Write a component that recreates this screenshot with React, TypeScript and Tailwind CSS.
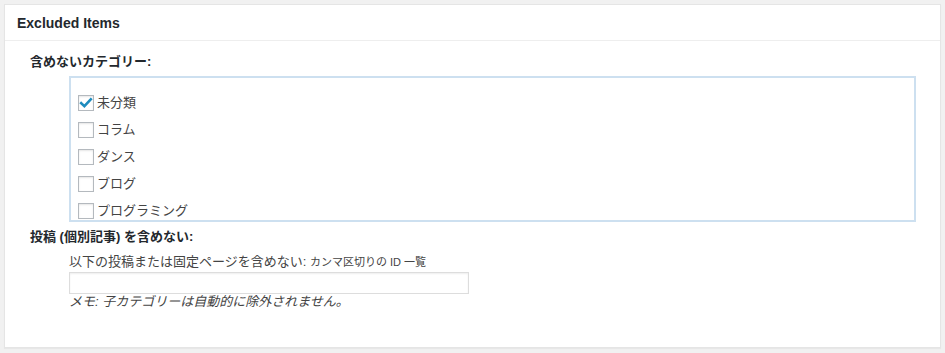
import React from "react";

const font = {
  fontFamily: '"Liberation Sans", "Noto Sans CJK JP", sans-serif',
};

function Check({ checked, label }: { checked?: boolean; label: string }) {
  return (
    <div className="flex items-center h-4 mb-[11px]">
      <span className="relative w-4 h-4 border border-[#b4b9be] bg-white shadow-[inset_0_1px_2px_rgba(0,0,0,0.1)] shrink-0">
        {checked && (
          <svg
            viewBox="0 0 16 16"
            className="absolute left-[-1px] top-[-1px] w-4 h-4"
          >
            <path
              d="M3.2 8.2 L6.4 11.2 L12.8 4.4"
              fill="none"
              stroke="#1e8cbe"
              strokeWidth="2.6"
              strokeLinecap="square"
              strokeLinejoin="miter"
            />
          </svg>
        )}
      </span>
      <span className="ml-[3px] text-[13px] leading-[16px] text-[#444]">
        {label}
      </span>
    </div>
  );
}

export default function App() {
  return (
    <div
      className="w-full h-[353px] bg-[#f1f1f1] pt-[4px] px-[4px]"
      style={font}
    >
      <div className="h-[344px] bg-white border border-[#e5e5e5] shadow-[0_1px_1px_rgba(0,0,0,0.04)] flex flex-col">
        <div className="h-[36px] border-b border-[#eeeeee] flex items-center pl-[12px]">
          <h2 className="text-[14px] font-bold text-[#23282d] leading-[18px]">
            Excluded Items
          </h2>
        </div>
        <div className="pt-[12px] pl-[25px] pr-[24px]">
          <div className="text-[13px] font-bold text-[#23282d] leading-[18px]">
            含めないカテゴリー:
          </div>
          <div className="mt-[5px] ml-[39px] h-[146px] border-2 border-[#cde0f0] overflow-hidden pt-[17px] pl-[7px]">
            <Check checked label="未分類" />
            <Check label="コラム" />
            <Check label="ダンス" />
            <Check label="ブログ" />
            <Check label="プログラミング" />
          </div>
          <div className="mt-[6px] text-[13px] font-bold text-[#23282d] leading-[18px]">
            投稿 (個別記事) を含めない:
          </div>
          <div className="ml-[39px]">
            <div className="mt-[7px] text-[13px] text-[#444] leading-[18px]">
              以下の投稿または固定ページを含めない:{" "}
              <span className="text-[11px]">カンマ区切りの ID 一覧</span>
            </div>
            <input
              type="text"
              className="mt-[1px] block w-[400px] h-[22px] border border-[#dddddd] bg-white shadow-[inset_0_1px_2px_rgba(0,0,0,0.07)] outline-none"
            />
            <div className="text-[13px] italic text-[#444] leading-[16px]">
              メモ: 子カテゴリーは自動的に除外されません。
            </div>
          </div>
        </div>
      </div>
    </div>
  );
}
